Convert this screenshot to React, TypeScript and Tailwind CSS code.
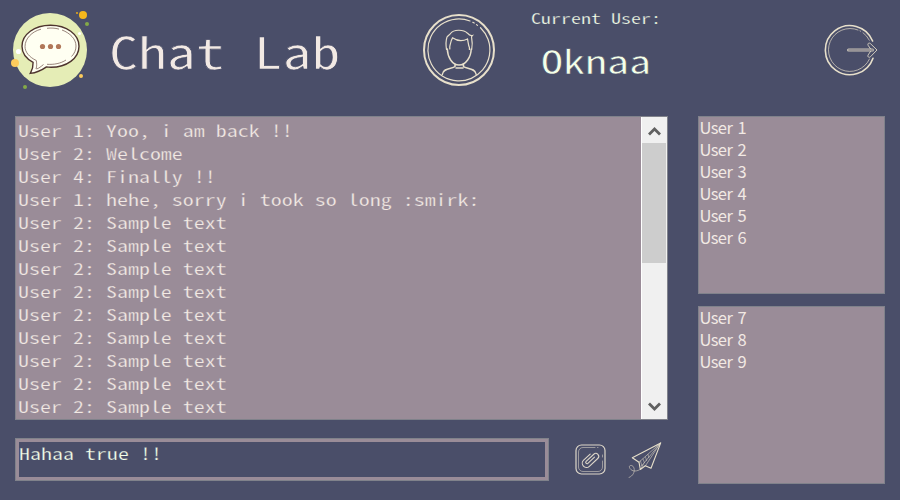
import React from "react";

const messages = [
  "User 1: Yoo, i am back !!",
  "User 2: Welcome",
  "User 4: Finally !!",
  "User 1: hehe, sorry i took so long :smirk:",
  ...Array.from({ length: 9 }, () => "User 2: Sample text"),
];

const online = ["User 1", "User 2", "User 3", "User 4", "User 5", "User 6"];
const offline = ["User 7", "User 8", "User 9"];

function ChatLogo() {
  return (
    <svg className="h-[92px] w-[92px] shrink-0" viewBox="0 0 92 92" fill="none">
      <circle cx="50" cy="50" r="37" fill="#e5edb6" />
      <path
        d="M50.500 25.200c16 0 28.500 9 28.500 21 0 12.300-12.500 21-28 21-1.500 0-3 0-4.500-.3-4.500 3.200-9.500 5.800-16.200 6.500 2-3.500 3-7 2.800-11C26 58.500 22 53 22 46.200c0-12 12.500-21 28.500-21z"
        fill="#fffff2"
        stroke="#4e342e"
        strokeWidth="1.400"
      />
      <path
        d="M47 28.300c4-.5 8-.3 12 .8M62 30c8 3 14 9 14 16 0 4-1.500 7.500-4.500 10.500M66 60c-5.500 3.600-12 4.700-19 4.300M36.500 69c2.500-.7 4.500-2.500 7-4.500M36 69c1-3 .8-5 .3-8.500C29 57 25 52 25 46.500c0-8 7-15 16-17.300"
        stroke="#6d5048"
        strokeWidth=".7"
      />
      <circle cx="42.500" cy="46.500" r="2.600" fill="#b17859" />
      <circle cx="50.500" cy="46.500" r="2.600" fill="#b17859" />
      <circle cx="58.500" cy="46.500" r="2.600" fill="#b17859" />
      <circle cx="83" cy="15" r="4" fill="#f5b71c" />
      <circle cx="77" cy="13" r="1.100" fill="#e0a41f" />
      <circle cx="87" cy="24" r="2" fill="#84a947" />
      <circle cx="79.500" cy="33.500" r="1.600" fill="#fff" />
      <circle cx="18.500" cy="51.500" r="2.600" fill="#fff" />
      <circle cx="15" cy="63" r="4" fill="#fdcb5c" />
      <circle cx="25" cy="87" r="2" fill="#84a947" />
      <circle cx="81" cy="76" r="2" fill="#fdcb5c" />
    </svg>
  );
}

function AvatarIcon() {
  return (
    <svg className="h-[72px] w-[72px] shrink-0" viewBox="0 0 72 72" fill="none" stroke="#e8e0cb" strokeLinecap="round">
      <circle cx="36" cy="36" r="35" strokeWidth="2" />
      <path d="M57.500 13.700A31 31 0 1 1 47 7" strokeWidth="1.200" />
      <path d="M49.800 8.300l1.400.7M53.500 10.600l1 .8" strokeWidth="1.200" />
      <path
        d="M23.500 35.500C22.800 31 23 26 24 23c1-1.500 2.500-2 3.500-3.500 3-4 12.500-4.500 17-.3 1.200 1.600 2.500 2.800 4.800 2.300-1 1-1 2-.6 3 .8 3.500.6 7.500 0 11M26.800 35v-2.500c.7-3 1.200-6.500 2.700-8.700 5 3.500 10.500 3.500 15 1.200.7 3 .7 6 1.900 8.500v2"
        strokeWidth="1.200"
      />
      <path d="M24.300 35c.3 8 4.700 16 11.700 16s12-8 12.200-16M32 50.500v2c-2.500 2.500-12 1-12.700 8M40.500 50.500v2c2.500 2.500 12 1 12.700 8M33 54h7" strokeWidth="1.500" />
    </svg>
  );
}

function LogoutIcon() {
  return (
    <svg className="h-[52px] w-[54px] shrink-0" viewBox="0 0 54 52" fill="none" stroke="#e8e0cb" strokeLinecap="round">
      <path d="M48.600 17A24.500 24.500 0 1 0 49 34.200" strokeWidth="1.600" />
      <path d="M34 6A21.500 21.500 0 1 0 45.500 35M36 6.900l.6.300M39 8.700a21.500 21.500 0 0 1 6.300 7.500" strokeWidth=".9" strokeOpacity=".75" />
      <path d="M24.500 26h24" strokeWidth="3" stroke="#c9c3b8" />
      <path d="M24.800 26h24" strokeWidth="1.400" stroke="#88858c" />
      <path d="M46.500 24.800l-2.300-3.300c-1-1.800.8-3.300 2.300-1.800L53 26l-6.500 6.700c-1.500 1.500-3.300 0-2.300-1.800l2.300-3.500" strokeWidth="1" strokeOpacity=".85" />
    </svg>
  );
}

function AttachIcon() {
  return (
    <svg className="h-[32px] w-[32px] shrink-0" viewBox="0 0 32 32" fill="none" stroke="#ddd6c9" strokeLinecap="round">
      <rect x="1" y="1" width="29" height="29" rx="5.500" strokeWidth="1.200" />
      <path d="M20 3.500H8a4.500 4.500 0 0 0-4.500 4.500v15A4.500 4.500 0 0 0 8 27.500h15a4.500 4.500 0 0 0 4.500-4.500v-6M22.500 3.500h.5M27.500 11v2" strokeWidth=".8" strokeOpacity=".7" />
      <path
        d="M4.500 1H-4.500a1.300 1.300 0 0 1 0-2.600H6a2.900 2.900 0 0 1 0 5.800H-5.500a4.200 4.200 0 0 1 0-8.400H3.500"
        strokeWidth="1.100"
        transform="translate(15.500 15.500) rotate(-43)"
      />
    </svg>
  );
}

function SendIcon() {
  return (
    <svg className="h-[36px] w-[34px] shrink-0" viewBox="0 0 34 36" fill="none" stroke="#e8e0cb" strokeLinecap="round" strokeLinejoin="round">
      <path d="M32.700 .9L4.300 15.700l6.700 4.500 1.300 7.300 5-3.700 5.700 2.500L32.700 .9z" strokeWidth="1.100" />
      <path d="M32.500 1L11 20.200M32.500 1L17.300 24M31 3L13.500 24" strokeWidth=".8" strokeOpacity=".7" />
      <path d="M12.500 19l1.500 5M15 17l1.500 4M17.500 15l1 3.500M20 12.500l.8 3M12.300 27.500l3-5" strokeWidth=".8" strokeOpacity=".6" />
      <path d="M1 35.500c4-1.500 6-5.500 5-9.500-1-3.500-5.500-3.200-4.500-.5 1.200 3.300 5.500 4.800 10 2.300" strokeWidth=".9" strokeOpacity=".6" />
    </svg>
  );
}

function UserList({ users }: { users: string[] }) {
  return (
    <ul className="h-[178px] border border-[#80828b] bg-[#9a8c98] pl-[0.5px] font-['Noto_Sans_CJK_SC',sans-serif] text-[16.5px] leading-[22px] tracking-[-0.6px] text-[#f2e9e4] [word-spacing:2.2px]">
      {users.map((u) => (
        <li key={u} className="relative -top-px">{u}</li>
      ))}
    </ul>
  );
}

export default function App() {
  return (
    <div className="flex h-[500px] w-[900px] flex-col overflow-hidden bg-[#4a4e69] font-['Noto_Sans_Mono_CJK_SC','Liberation_Mono',monospace] text-[#f2e9e4]">
      <header className="flex h-[116px] items-start">
        <ChatLogo />
        <h1 className="ml-[17px] mr-[82px] mt-[21px] w-[232px] origin-left scale-x-[1.345] whitespace-pre text-[43px] font-normal leading-[58px] [-webkit-text-stroke:0.7px_#4a4e69]">Chat Lab</h1>
        <div className="mt-[14px]">
          <AvatarIcon />
        </div>
        <div className="ml-[36px] w-[293px] text-[#f4ffe9]">
          <p className="w-[130px] origin-left scale-x-[1.342] whitespace-pre pt-[8px] text-[14.9px] leading-[20px] [-webkit-text-stroke:0.25px_#4a4e69]">Current User:</p>
          <p className="ml-[10px] mt-[9px] w-[110px] origin-left scale-x-[1.341] whitespace-pre text-[32.8px] leading-[46px] [-webkit-text-stroke:0.5px_#4a4e69]">Oknaa</p>
        </div>
        <div className="mt-[24px]">
          <LogoutIcon />
        </div>
      </header>
      <div className="flex gap-[30px] pl-[15px]">
        <main className="w-[653px]">
          <section className="flex h-[304px] border border-[#80828b] bg-[#9a8c98]">
            <div className="flex-1 whitespace-pre pl-[2px] pt-[2px] text-[16.4px] leading-[23px] [-webkit-text-stroke:0.25px_#9a8c98]">
              {messages.map((m, i) => (
                <p key={i} className="w-[400px] origin-left scale-x-[1.341]">{m}</p>
              ))}
            </div>
            <div className="flex w-[26px] flex-col border-l border-white bg-[#f0f0f0]">
              <svg className="h-[26px] w-[25px]" viewBox="0 0 25 26" fill="none">
                <path d="M7 17.500l5.500-5.500 5.500 5.500" stroke="#606060" strokeWidth="2.800" />
              </svg>
              <div className="mr-px h-[120px] bg-[#cdcdcd]" />
              <svg className="mt-auto h-[26px] w-[25px]" viewBox="0 0 25 26" fill="none">
                <path d="M7 10.500l5.500 5.500 5.500-5.500" stroke="#606060" strokeWidth="2.800" />
              </svg>
            </div>
          </section>
          <div className="mt-[18px] flex items-start">
            <div className="h-[43px] w-[534px] border border-[#80828b] bg-[#9a8c98] p-[3px]">
              <div className="h-full bg-[#4a4e69]">
                <p className="w-[300px] origin-left scale-x-[1.341] whitespace-pre text-[16.4px] leading-[23px] text-[#f4ffe9] [-webkit-text-stroke:0.25px_#4a4e69]">Hahaa true !!</p>
              </div>
            </div>
            <div className="ml-[26px] mt-[6px]">
              <AttachIcon />
            </div>
            <div className="ml-[21px] mt-[4px]">
              <SendIcon />
            </div>
          </div>
        </main>
        <aside className="flex w-[187px] flex-col gap-[12px]">
          <UserList users={online} />
          <UserList users={offline} />
        </aside>
      </div>
    </div>
  );
}
